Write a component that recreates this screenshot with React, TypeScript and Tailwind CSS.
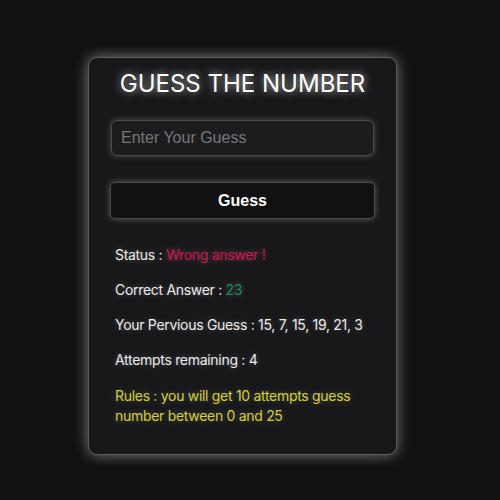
import React from "react";

const App = () => {
  const guesses = [15, 7, 15, 19, 21, 3];

  return (
    <div
      className="w-[500px] h-[500px] bg-[#111113] pt-[57px] pl-[88px]"
      style={{ fontFamily: "Inter, 'Open Sans', sans-serif" }}
    >
      <div className="w-[309px] h-[398px] rounded-[9px] border border-[#5a5a5c] bg-[#18181a] shadow-[0_0_14px_rgba(255,255,255,0.45)] px-[22px] pt-[8px]">
        <h1 className="text-center text-white text-[24px] tracking-[0px] [text-shadow:0_0_8px_rgba(255,255,255,0.7)]">
          GUESS THE NUMBER
        </h1>

        <input
          type="text"
          placeholder="Enter Your Guess"
          className="mt-[18px] block w-[263px] h-[36px] rounded-[6px] border border-[#4a4a4c] bg-[#1c1c1e] shadow-[0_0_6px_rgba(255,255,255,0.25)] px-[9px] text-[16px] text-white placeholder:text-[#77777a] outline-none"
          style={{ fontFamily: "Arial, 'Liberation Sans', sans-serif" }}
        />

        <button
          className="mt-[26px] block w-[265px] -ml-[1px] h-[37px] rounded-[5px] border border-[#4a4a4c] bg-[#111113] shadow-[0_0_6px_rgba(255,255,255,0.3)] text-white font-bold text-[16px]"
          style={{ fontFamily: "Arial, 'Liberation Sans', sans-serif" }}
        >
          Guess
        </button>

        <div className="mt-[27px] pl-[4px] flex flex-col gap-[17px] text-[14px] leading-[18px] tracking-[-0.3px] whitespace-nowrap text-[#ececec] [text-shadow:0_0_6px_rgba(255,255,255,0.25)]">
          <p>
            Status : <span className="text-[#d4114e]">Wrong answer !</span>
          </p>
          <p>
            Correct Answer : <span className="text-[#1f8b5f]">23</span>
          </p>
          <p>Your Pervious Guess : {guesses.join(", ")}</p>
          <p>Attempts remaining : 4</p>
          <p className="text-[#d2cf3b] leading-[20px] whitespace-normal">
            Rules : you will get 10 attempts guess number between 0 and 25
          </p>
        </div>
      </div>
    </div>
  );
};

export default App;
